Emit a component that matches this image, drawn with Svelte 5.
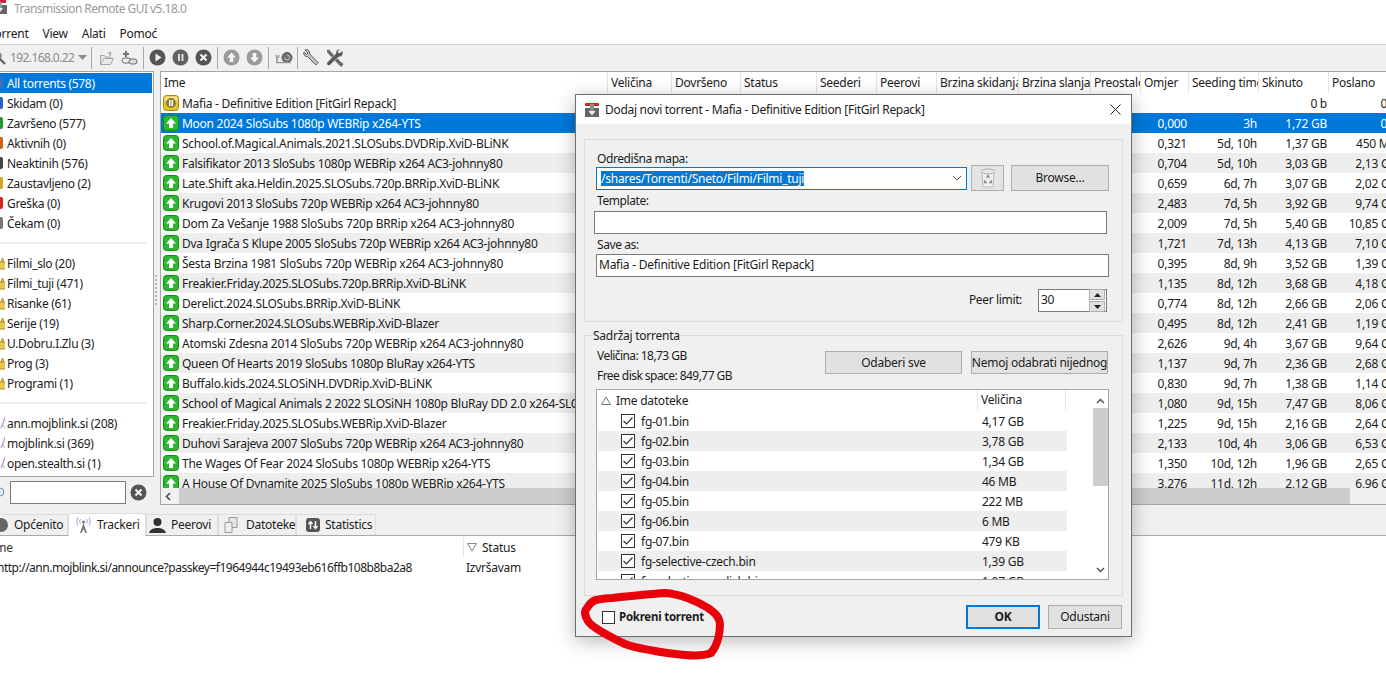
<script>
  const cols = [
    ['Ime', 447], ['Veličina', 64], ['Dovršeno', 69], ['Status', 76], ['Seederi', 60], ['Peerovi', 60],
    ['Brzina skidanja', 82], ['Brzina slanja', 72], ['Preostalo', 50], ['Omjer', 48], ['Seeding time', 70], ['Skinuto', 70], ['Poslano', 70]
  ];
  const gridCols = cols.map((c) => c[1] + 'px').join(' ');
  const torrents = [
    ['Mafia - Definitive Edition [FitGirl Repack]', '', '', '0 b', '0 b'],
    ['Moon 2024 SloSubs 1080p WEBRip x264-YTS', '0,000', '3h', '1,72 GB', '0 b'],
    ['School.of.Magical.Animals.2021.SLOSubs.DVDRip.XviD-BLiNK', '0,321', '5d, 10h', '1,37 GB', '450 MB'],
    ['Falsifikator 2013 SloSubs 1080p WEBRip x264 AC3-johnny80', '0,704', '5d, 10h', '3,03 GB', '2,13 GB'],
    ['Late.Shift aka.Heldin.2025.SLOSubs.720p.BRRip.XviD-BLiNK', '0,659', '6d, 7h', '3,07 GB', '2,02 GB'],
    ['Krugovi 2013 SloSubs 720p WEBRip x264 AC3-johnny80', '2,483', '7d, 5h', '3,92 GB', '9,74 GB'],
    ['Dom Za Vešanje 1988 SloSubs 720p BRRip x264 AC3-johnny80', '2,009', '7d, 5h', '5,40 GB', '10,85 GB'],
    ['Dva Igrača S Klupe 2005 SloSubs 720p WEBRip x264 AC3-johnny80', '1,721', '7d, 13h', '4,13 GB', '7,10 GB'],
    ['Šesta Brzina 1981 SloSubs 720p WEBRip x264 AC3-johnny80', '0,395', '8d, 9h', '3,52 GB', '1,39 GB'],
    ['Freakier.Friday.2025.SLOSubs.720p.BRRip.XviD-BLiNK', '1,135', '8d, 12h', '3,68 GB', '4,18 GB'],
    ['Derelict.2024.SLOSubs.BRRip.XviD-BLiNK', '0,774', '8d, 12h', '2,66 GB', '2,06 GB'],
    ['Sharp.Corner.2024.SLOSubs.WEBRip.XviD-Blazer', '0,495', '8d, 12h', '2,41 GB', '1,19 GB'],
    ['Atomski Zdesna 2014 SloSubs 720p WEBRip x264 AC3-johnny80', '2,626', '9d, 4h', '3,67 GB', '9,64 GB'],
    ['Queen Of Hearts 2019 SloSubs 1080p BluRay x264-YTS', '1,137', '9d, 7h', '2,36 GB', '2,68 GB'],
    ['Buffalo.kids.2024.SLOSiNH.DVDRip.XviD-BLiNK', '0,830', '9d, 7h', '1,38 GB', '1,14 GB'],
    ['School of Magical Animals 2 2022 SLOSiNH 1080p BluRay DD 2.0 x264-SLOSiNH', '1,080', '9d, 15h', '7,47 GB', '8,06 GB'],
    ['Freakier.Friday.2025.SLOSubs.WEBRip.XviD-Blazer', '1,225', '9d, 15h', '2,16 GB', '2,64 GB'],
    ['Duhovi Sarajeva 2007 SloSubs 720p WEBRip x264 AC3-johnny80', '2,133', '10d, 4h', '3,06 GB', '6,53 GB'],
    ['The Wages Of Fear 2024 SloSubs 1080p WEBRip x264-YTS', '1,350', '10d, 12h', '1,96 GB', '2,65 GB'],
    ['A House Of Dynamite 2025 SloSubs 1080p WEBRip x264-YTS', '3,276', '11d, 12h', '2,12 GB', '6,96 GB']
  ];
  const states = [
    ['All torrents (578)', '#3f6fb5'], ['Skidam (0)', '#2a62c9'], ['Završeno (577)', '#1f9a2d'], ['Aktivnih (0)', '#c7661a'],
    ['Neaktinih (576)', '#444444'], ['Zaustavljeno (2)', '#d3a71d'], ['Greška (0)', '#d9261c'], ['Čekam (0)', '#777777']
  ];
  const folders = ['Filmi_slo (20)', 'Filmi_tuji (471)', 'Risanke (61)', 'Serije (19)', 'U.Dobru.I.Zlu (3)', 'Prog (3)', 'Programi (1)'];
  const trackers = ['ann.mojblink.si (208)', 'mojblink.si (369)', 'open.stealth.si (1)'];
  const files = [
    ['fg-01.bin', '4,17 GB'], ['fg-02.bin', '3,78 GB'], ['fg-03.bin', '1,34 GB'], ['fg-04.bin', '46 MB'], ['fg-05.bin', '222 MB'],
    ['fg-06.bin', '6 MB'], ['fg-07.bin', '479 KB'], ['fg-selective-czech.bin', '1,39 GB'], ['fg-selective-english.bin', '1,97 GB']
  ];
</script>

<div class="app">
  <div class="title">
    <svg class="appicon" width="16" height="16" viewBox="0 0 16 16"><rect x="1" y="6" width="14" height="9" fill="#666"/><rect x="2" y="1" width="12" height="3" fill="#d2232a"/><rect x="6" y="3" width="4" height="6" fill="#999"/><path d="M5 9h6l-3 4z" fill="#eee"/></svg>
    <span>Transmission Remote GUI v5.18.0</span>
  </div>
  <div class="menu"><span class="first">Torrent</span><span>View</span><span>Alati</span><span>Pomoć</span></div>

  <div class="toolbar">
    <svg class="t-search" width="16" height="16" viewBox="0 0 16 16"><circle cx="6" cy="6" r="4" fill="#bbb" stroke="#777" stroke-width="1.4"/><path d="M9 9l5 5" stroke="#666" stroke-width="2.4"/></svg>
    <span class="host">192.168.0.22</span>
    <svg class="t-drop" width="9" height="5" viewBox="0 0 9 5"><path d="M0 0h9L4.500 5z" fill="#8a8a8a"/></svg>
    <i class="sep s1"></i>
    <svg class="t-a" width="16" height="16" viewBox="0 0 16 16"><path d="M1.500 14.500v-9h4l1 1.500h5v2M1.500 14.500h10l3-6H5z" fill="#e7e7e7" stroke="#a5a5a5"/><path d="M8 4l3-3 3 3-2 0v2h-2V4z" fill="#bbb"/></svg>
    <svg class="t-b" width="17" height="16" viewBox="0 0 17 16"><path d="M5 1v6M2 4h6" stroke="#777" stroke-width="2"/><rect x="1" y="8" width="9" height="5" rx="2.500" fill="#eee" stroke="#666"/><rect x="8" y="9" width="8" height="5" rx="2.500" fill="#ddd" stroke="#666"/></svg>
    <i class="sep s2"></i>
    <svg class="t-c" width="17" height="17" viewBox="0 0 17 17"><circle cx="8.500" cy="8.500" r="8" fill="#555"/><path d="M6.500 4.500l6 4-6 4z" fill="#f2f2f2"/></svg>
    <svg class="t-d" width="17" height="17" viewBox="0 0 17 17"><circle cx="8.500" cy="8.500" r="8" fill="#616161"/><path d="M6 5h2v7H6zM9.500 5h2v7h-2z" fill="#ddd"/></svg>
    <svg class="t-d" width="17" height="17" viewBox="0 0 17 17"><circle cx="8.500" cy="8.500" r="8" fill="#555"/><path d="M5.500 5.500l6 6M11.500 5.500l-6 6" stroke="#f2f2f2" stroke-width="2.200"/></svg>
    <i class="sep s3"></i>
    <svg class="t-c" width="17" height="17" viewBox="0 0 17 17"><circle cx="8.500" cy="8.500" r="8" fill="#9a9a9a"/><path d="M8.500 3.500l4.500 5h-2.700v4.500H6.700V8.500H4z" fill="#f5f5f5"/></svg>
    <svg class="t-d" width="17" height="17" viewBox="0 0 17 17"><circle cx="8.500" cy="8.500" r="8" fill="#9a9a9a"/><path d="M8.500 13.500L4 8.500h2.700V4h3.600v4.500H13z" fill="#f5f5f5"/></svg>
    <i class="sep s4"></i>
    <svg class="t-e" width="18" height="14" viewBox="0 0 18 14"><circle cx="12" cy="6.500" r="5" fill="#6e6e6e" stroke="#555"/><path d="M12 4a2.500 2.500 0 1 1-2.500 2.500" fill="none" stroke="#c8c8c8"/><path d="M1 11.500h15M2 11V7M1 4l1 3M4 4L3 7" stroke="#999" stroke-width="1.500" fill="none"/></svg>
    <i class="sep s5"></i>
    <svg class="t-f" width="16" height="17" viewBox="0 0 16 17"><path d="M2 1c3-1 5 1 4.500 4l8.500 8.500-2 2.500L4.500 7.500C2 8 0 5.500 1 3l2.500 2.500L5 4z" fill="#c9c9c9" stroke="#555"/></svg>
    <svg class="t-g" width="18" height="18" viewBox="0 0 18 18"><path d="M1 1l2-.5 2.500 3 9.500 9.500 2.500 2-2 3-2.500-2L3.500 6 1 3z" fill="#6a6a6a"/><path d="M16.500 1.500l-2.500 2.500-1.500-.5-.5-1.500L14.500.5C11.500-.5 9.500 2 10 4.500L1.500 13c-1.500 1.500-.5 4 2 3.500L12.500 8c3 .5 5.500-2.500 4-6.500z" fill="#555" stroke="#f0f0f0" stroke-width=".6"/></svg>
  </div>

  <div class="main">
    <div class="side">
      <div class="cats">
        {#each states as s, i}
          <div class="cat" class:on={i === 0}>
            <svg class="mini" width="16" height="12" viewBox="0 0 16 12"><rect x="2" y="0" width="12" height="12" rx="2" fill={s[1]}/></svg>
            <span>{s[0]}</span>
          </div>
        {/each}
        <div class="div"><i></i></div>
        {#each folders as f}
          <div class="cat">
            <svg class="mini" width="16" height="14" viewBox="0 0 16 14"><path d="M12 6l1.500-4 1.500 4" fill="#e9c84f" stroke="#b08d2a" stroke-width="1"/><path d="M10 6h7v7h-7z" fill="#e9c84f" stroke="#b08d2a"/></svg>
            <span>{f}</span>
          </div>
        {/each}
        <div class="div"><i></i></div>
        {#each trackers as t}
          <div class="cat">
            <svg class="mini" width="16" height="14" viewBox="0 0 16 14"><path d="M16 1c-1 3-2 7-4 11" stroke="#b99ad9" stroke-width="1.300" fill="none"/><path d="M13 8l3 4" stroke="#aaa" stroke-width="1"/></svg>
            <span>{t}</span>
          </div>
        {/each}
      </div>
      <div class="filter">
        <svg class="f-ic" width="12" height="14" viewBox="0 0 12 14"><circle cx="2" cy="6" r="4" fill="#dbe8f7" stroke="#7a8fa8"/></svg>
        <div class="f-in"></div>
        <svg class="f-x" width="17" height="17" viewBox="0 0 17 17"><circle cx="8.500" cy="8.500" r="8" fill="#555"/><path d="M5.500 5.500l6 6M11.500 5.500l-6 6" stroke="#f2f2f2" stroke-width="2.200"/></svg>
      </div>
    </div>
    <div class="split"><i></i><i></i><i></i><i></i><i></i><i></i><i></i><i></i></div>
    <div class="listpanel">
      <div class="lhead" style="grid-template-columns:{gridCols}">
        {#each cols as c}<span>{c[0]}</span>{/each}
      </div>
      <div class="lrows">
        {#each torrents as t, i}
          <div class="lrow" class:alt={i % 2 === 1} class:sel={i === 1} style="grid-template-columns:{gridCols}">
            <span class="nm">
              {#if i === 0}
                <svg width="16" height="16" viewBox="0 0 16 16"><rect x="0.500" y="0.500" width="15" height="15" rx="3" fill="#e4c32c" stroke="#a28a1a"/><rect x="1.500" y="1.500" width="13" height="5" rx="2" fill="#f3e28a"/><circle cx="8" cy="8" r="5" fill="#8f7f3a"/><path d="M6 5h1.500v6H6zM8.500 5H10v6H8.500z" fill="#fff"/></svg>
              {:else}
                <svg width="16" height="16" viewBox="0 0 16 16"><rect x="0.500" y="0.500" width="15" height="15" rx="3" fill="#2fb52f" stroke="#1a8c1a"/><path d="M8 3l5 5.500h-3V13H6V8.500H3z" fill="#fff"/></svg>
              {/if}
              <b>{t[0]}</b>
            </span>
            <span></span><span></span><span></span><span></span><span></span><span></span><span></span><span></span>
            <span class="num">{t[1]}</span><span class="num">{t[2]}</span><span class="num">{t[3]}</span><span class="num">{t[4]}</span>
          </div>
        {/each}
      </div>
      <div class="hscroll">
        <svg class="h-arrow" width="6" height="9" viewBox="0 0 6 9"><path d="M5 1L1.500 4.500 5 8" stroke="#444" stroke-width="1.500" fill="none"/></svg>
        <div class="h-thumb"></div>
      </div>
    </div>
  </div>

  <div class="tabs">
    <div class="tab t1"><svg width="16" height="16" viewBox="0 0 16 16"><circle cx="8" cy="8" r="7" fill="#666"/></svg><span>Općenito</span></div>
    <div class="tab t2 active"><svg width="17" height="17" viewBox="0 0 17 17"><path d="M8.500 6L5 16h1.500l2-4 2 4H12z" fill="#777"/><circle cx="8.500" cy="5" r="1.500" fill="#777"/><path d="M5.500 2c-1 1.500-1 3 0 4.500M11.500 2c1 1.500 1 3 0 4.500M3 .5c-1.500 2.500-1.500 5.500 0 8M14 .5c1.500 2.500 1.500 5.500 0 8" stroke="#b08ed6" fill="none"/></svg><span>Trackeri</span></div>
    <div class="tab t3"><svg width="17" height="16" viewBox="0 0 17 16"><circle cx="8.500" cy="5" r="4" fill="#333"/><path d="M0 16c1-4 5-5 8.500-5s7.500 1 8.500 5z" fill="#333"/></svg><span>Peerovi</span></div>
    <div class="tab t4"><svg width="14" height="16" viewBox="0 0 14 16"><path d="M5 .5h8v10H5z" fill="#e5e5e5" stroke="#999"/><path d="M1 5.500h7v10H1z" fill="#eee" stroke="#999"/></svg><span>Datoteke</span></div>
    <div class="tab t5"><svg width="14" height="14" viewBox="0 0 14 14"><rect width="14" height="14" rx="3" fill="#555"/><path d="M4.500 11V4M2.500 6l2-2.500 2 2.500M9.500 3v7M7.500 8l2 2.500 2-2.500" stroke="#fff" stroke-width="1.400" fill="none"/></svg><span>Statistics</span></div>
  </div>
  <div class="trk">
    <div class="trk-h"><span class="c1">Name</span><span class="c2"><svg width="10" height="9" viewBox="0 0 10 9"><path d="M.5 .5h9L5 8z" fill="none" stroke="#888"/></svg><em>Status</em></span></div>
    <div class="trk-r"><span class="c1 url">http://ann.mojblink.si/announce?passkey=f1964944c19493eb616ffb108b8ba2a8</span><span class="c2r">Izvršavam</span></div>
  </div>

  <div class="dlg">
    <div class="dlg-t">
      <svg width="16" height="16" viewBox="0 0 16 16"><rect x="1" y="6" width="14" height="9" fill="#666"/><rect x="1" y="1" width="14" height="3" rx="1" fill="#c9252b"/><rect x="6" y="2" width="4" height="7" fill="#8d8d8d"/><path d="M4.500 9h7L8 13.500z" fill="#eee"/></svg>
      <span>Dodaj novi torrent - Mafia - Definitive Edition [FitGirl Repack]</span>
      <svg class="x" width="11" height="11" viewBox="0 0 11 11"><path d="M.5 .5l10 10M10.500 .5l-10 10" stroke="#222" stroke-width="1"/></svg>
    </div>
    <div class="g1">
      <div class="lb">Odredišna mapa:</div>
      <div class="r-combo">
        <div class="combo"><span class="seltext">/shares/Torrenti/Sneto/Filmi/Filmi_tuji</span><svg width="10" height="6" viewBox="0 0 10 6"><path d="M1 1l4 4 4-4" stroke="#555" fill="none"/></svg></div>
        <button class="btn trash"><svg width="16" height="20" viewBox="0 0 16 20"><path d="M2 4h12l-1 15H3z" fill="#f1f1f1" stroke="#bbb"/><ellipse cx="8" cy="3.500" rx="6.500" ry="2.500" fill="#e8e8e8" stroke="#aaa"/><path d="M6.500 10l1.500-2.500 1.500 2.500M11 12l.5 2.500H9M5 12l-.5 2.500H7" fill="none" stroke="#888" stroke-width="1.300"/></svg></button>
        <button class="btn browse">Browse...</button>
      </div>
      <div class="lb l2">Template:</div>
      <div class="input tpl"></div>
      <div class="lb l3">Save as:</div>
      <div class="input sav">Mafia - Definitive Edition [FitGirl Repack]</div>
      <div class="peer">
        <span class="pl">Peer limit:</span>
        <div class="spin"><span>30</span>
          <div class="spb"><i><svg width="7" height="4" viewBox="0 0 7 4"><path d="M0 4h7L3.500 0z" fill="#222"/></svg></i><i><svg width="7" height="4" viewBox="0 0 7 4"><path d="M0 0h7L3.500 4z" fill="#222"/></svg></i></div>
        </div>
      </div>
    </div>
    <div class="g2">
      <div class="legend">Sadržaj torrenta</div>
      <div class="info">
        <div class="inf-l"><div>Veličina: 18,73 GB</div><div>Free disk space: 849,77 GB</div></div>
        <div class="inf-b"><button class="btn sb">Odaberi sve</button><button class="btn sb">Nemoj odabrati nijednog</button></div>
      </div>
      <div class="tree">
        <div class="t-main">
          <div class="t-head"><span class="h1"><svg width="10" height="9" viewBox="0 0 10 9"><path d="M.5 8.500h9L5 1z" fill="none" stroke="#777"/></svg><em>Ime datoteke</em></span><span class="h2">Veličina</span></div>
          {#each files as f, i}
            <div class="t-row" class:alt={i % 2 === 1}>
              <span class="t-n"><svg width="14" height="14" viewBox="0 0 14 14"><rect x="0.500" y="0.500" width="13" height="13" fill="#fff" stroke="#333"/><path d="M2.500 7l3 3 6-6.500" stroke="#333" stroke-width="1.200" fill="none"/></svg><em>{f[0]}</em></span>
              <span class="t-s">{f[1]}</span>
            </div>
          {/each}
        </div>
        <div class="t-scroll">
          <svg width="9" height="6" viewBox="0 0 9 6"><path d="M1 5l3.500-3.500L8 5" stroke="#555" stroke-width="1.500" fill="none"/></svg>
          <div class="t-thumb"></div>
          <svg class="dn" width="9" height="6" viewBox="0 0 9 6"><path d="M1 1l3.500 3.500L8 1" stroke="#555" stroke-width="1.500" fill="none"/></svg>
        </div>
      </div>
    </div>
    <div class="dlg-b">
      <label class="start"><span class="box"></span><b>Pokreni torrent</b></label>
      <div class="acts"><button class="btn ok">OK</button><button class="btn">Odustani</button></div>
    </div>
  </div>

  <svg class="ring" width="1386" height="696" viewBox="0 0 1386 696"><path d="M612 598C630 596 648 594 665 593C680 594 697 601 708 608C715 613 719 616 720 624C720 632 718 645 711 653C703 656 695 656 685 655C675 654 665 653 655 651C645 649 635 648 625 644C616 640 609 636 602 632C596 628 591 626 588 621C585 616 584 611 587 608C590 603 592 601 596 600C601 599 606 598 612 598Z" fill="none" stroke="#e8000b" stroke-width="8" stroke-linejoin="round"/></svg>
</div>

<style>
  :global(body) { margin: 0; background: #fff; }
  .app { position: relative; width: 1386px; height: 696px; overflow: hidden; background: #fff; color: #1c1c1c; font: 12px/16px "Noto Sans", sans-serif; letter-spacing: -0.25px; }
  svg { display: block; flex: none; }
  em { font-style: normal; padding-top: 2px; }
  .title { height: 24px; display: flex; gap: 6px; align-items: flex-start; margin-left: -8px; color: #9a9a9a; }
  .title span { margin-top: 1px; font-size: 12px; letter-spacing: -0.54px; }
  .appicon { margin-top: -1px; }
  .menu { height: 20px; display: flex; align-items: center; gap: 14px; margin-left: -11px; border-bottom: 1px solid #d4d4d4; box-sizing: content-box; }
  .toolbar { height: 25px; background: #f0f0f0; display: flex; align-items: center; }
  .t-search { margin-left: -9px; }
  .host { margin-left: 3px; width: 63px; color: #8c8c8c; white-space: nowrap; letter-spacing: -0.6px; }
  .t-drop { margin-left: 5px; }
  .sep { width: 1px; height: 22px; background: #a9a9a9; flex: none; }
  .s1 { margin-left: 4px; } .s2 { margin-left: 5px; } .s3 { margin-left: 5px; } .s4 { margin-left: 5px; } .s5 { margin-left: 4px; }
  .t-a { margin-left: 7px; } .t-b { margin-left: 6px; } .t-c { margin-left: 5px; } .t-d { margin-left: 6px; }
  .t-e { margin-left: 6px; } .t-f { margin-left: 5px; } .t-g { margin-left: 7px; }

  .main { height: 440px; background: #f0f0f0; display: flex; align-items: flex-start; padding-top: 1px; box-sizing: border-box; }
  .side { width: 154px; flex: none; }
  .cats { height: 406px; box-sizing: border-box; background: #fff; border: 1px solid #a5a5a5; border-left: 0; padding: 1px 1px 0 0; }
  .cat { height: 20px; display: flex; align-items: center; }
  .cat span { white-space: nowrap; padding-top: 2px; letter-spacing: -0.32px; }
  .cat.on { background: #0078d7; color: #fff; }
  .mini { margin-left: -11px; margin-right: 2px; }
  .div { height: 20px; display: flex; align-items: center; padding-right: 6px; }
  .div i { display: block; width: 100%; height: 2px; background: #ececec; }
  .filter { height: 31px; display: flex; align-items: center; }
  .f-ic { margin-left: -2px; }
  .f-in { width: 114px; height: 21px; background: #fff; border: 1px solid #7a7a7a; flex: none; }
  .f-x { margin-left: 4px; }
  .split { width: 6px; flex: none; padding: 204px 0 0 1px; box-sizing: border-box; }
  .split i { display: block; width: 2px; height: 2px; margin-bottom: 2px; background: #b5b5b5; }
  .listpanel { flex: 1; min-width: 0; height: 434px; background: #fff; border: 1px solid #a5a5a5; border-width: 1px 0 1px 1px; box-sizing: border-box; overflow: hidden; }
  .lhead { display: grid; height: 21px; align-items: stretch; }
  .lhead span { padding: 3px 0 0 3px; border-right: 1px solid #e6e6e6; white-space: nowrap; overflow: hidden; box-sizing: border-box; }
  .lrows { height: 395px; overflow: hidden; }
  .lrow { display: grid; height: 20px; align-items: center; }
  .lrow span { white-space: nowrap; overflow: hidden; }
  .lrow.alt { background: #eeeeee; }
  .lrow.sel { background: #0078d7; color: #fff; }
  .nm { display: flex; align-items: center; gap: 3px; padding-left: 2px; }
  .nm b { font-weight: 400; padding-top: 2px; letter-spacing: -0.27px; }
  .lrow .num { text-align: right; padding: 2px 2px 0 0; }
  .hscroll { height: 17px; background: #f0f0f0; display: flex; align-items: center; }
  .h-arrow { margin-left: 4px; }
  .h-thumb { margin-left: 8px; width: 1171px; height: 17px; background: #cdcdcd; flex: none; }

  .tabs { height: 26px; background: #f0f0f0; display: flex; align-items: flex-end; border-bottom: 1px solid #a9a9a9; box-sizing: border-box; }
  .tab { height: 21px; display: flex; align-items: center; gap: 5px; box-sizing: border-box; background: #f0f0f0; border: 1px solid #dcdcdc; border-bottom: 0; white-space: nowrap; }
  .tab.active { height: 23px; background: #fff; margin-bottom: -1px; }
  .t1 { margin-left: -9px; width: 77px; padding-left: 1px; }
  .t2 { width: 78px; padding-left: 6px; }
  .t3 { width: 72px; padding-left: 2px; }
  .t4 { width: 78px; padding-left: 5px; gap: 8px; }
  .t5 { width: 80px; padding-left: 9px; gap: 5px; }
  .trk-h, .trk-r { display: flex; height: 20px; align-items: center; }
  .trk-h { margin-top: 1px; }
  .trk-h .c1 { margin-left: -20px; width: 483px; color: #333; padding-top: 2px; }
  .c1 { white-space: nowrap; flex: none; box-sizing: border-box; }
  .url { margin-left: -3px; width: 469px; letter-spacing: -0.5px; padding-top: 2px; }
  .c2 { display: flex; align-items: center; gap: 5px; height: 20px; border-left: 1px solid #e6e6e6; padding-left: 3px; }
  .c2r { padding-top: 2px; }

  .dlg { position: absolute; left: 575px; top: 94px; width: 557px; height: 543px; box-sizing: border-box; background: #f0f0f0; border: 1px solid #6e6e6e; box-shadow: 0 4px 18px rgba(0, 0, 0, 0.28); }
  .dlg-t { height: 29px; background: #fff; display: flex; align-items: center; gap: 5px; padding-left: 8px; letter-spacing: -0.3px; }
  .dlg-t span { flex: 1; }
  .x { margin-right: 10px; }
  .g1, .g2 { margin: 0 8px; width: 539px; box-sizing: border-box; border: 1px solid #dcdcdc; }
  .g1 { margin-top: 15px; height: 183px; padding: 10px 0 0 11px; }
  .lb { height: 16px; padding: 1px 0 0 1px; letter-spacing: -0.42px; box-sizing: content-box; }
  .r-combo { display: flex; align-items: center; height: 26px; margin-top: -2px; }
  .combo { width: 371px; height: 23px; box-sizing: border-box; background: #fff; border: 1px solid #0078d7; display: flex; align-items: center; justify-content: space-between; padding: 0 4px; flex: none; }
  .seltext { background: #0078d7; color: #fff; white-space: nowrap; line-height: 15px; }
  .btn { font: inherit; letter-spacing: inherit; color: #1c1c1c; background: #e1e1e1; border: 1px solid #adadad; padding: 0; box-sizing: border-box; white-space: nowrap; display: flex; align-items: center; justify-content: center; width: 74px; height: 24px; }
  .trash { width: 33px; height: 26px; margin-left: 4px; background: #e4e4e4; }
  .browse { width: 98px; height: 26px; margin-left: 7px; }
  .l2 { margin: 1px 0 -1px; }
  .input { height: 23px; box-sizing: border-box; background: #fff; border: 1px solid #7a7a7a; padding: 2px 2px 0; white-space: nowrap; }
  .tpl { width: 513px; margin: 3px 0 0 -2px; }
  .l3 { margin: 2px 0 -1px; }
  .sav { width: 513px; margin-top: 2px; }
  .peer { display: flex; justify-content: flex-end; align-items: center; gap: 16px; margin-top: 12px; width: 511px; }
  .pl { padding-bottom: 2px; letter-spacing: -0.35px; }
  .spin { width: 69px; height: 23px; box-sizing: border-box; background: #fff; border: 1px solid #7a7a7a; display: flex; align-items: center; justify-content: space-between; padding: 0 1px 0 2px; }
  .spin > span { padding-bottom: 1px; }
  .spb { width: 16px; display: flex; flex-direction: column; gap: 1px; }
  .spb i { height: 9px; background: #e1e1e1; border: 1px solid #adadad; display: flex; align-items: center; justify-content: center; }
  .g2 { margin-top: 13px; height: 261px; padding: 0 14px 0 12px; }
  .legend { width: fit-content; margin: -8px 0 0 -4px; background: #f0f0f0; height: 16px; }
  .info { display: flex; justify-content: space-between; height: 36px; margin-top: 3px; }
  .inf-l { padding-top: 1px; letter-spacing: -0.55px; }
  .inf-l div { height: 20px; }
  .inf-b { display: flex; gap: 9px; padding-top: 4px; }
  .sb { width: 137px; height: 23px; }
  .tree { width: 513px; height: 191px; margin: 6px 0 0 -1px; box-sizing: border-box; border: 1px solid #a5a5a5; background: #fff; display: flex; overflow: hidden; }
  .t-main { width: 469px; padding-left: 1px; flex: none; }
  .t-head { display: flex; height: 21px; align-items: flex-start; }
  .h1 { width: 380px; display: flex; align-items: center; gap: 5px; padding-left: 3px; box-sizing: border-box; border-right: 1px solid #e6e6e6; height: 20px; }
  .h2 { width: 88px; padding: 2px 0 0 3px; box-sizing: border-box; border-right: 1px solid #e6e6e6; height: 20px; }
  .t-row { display: flex; height: 20px; align-items: center; }
  .t-row.alt { background: #eeeeee; }
  .t-n { width: 380px; display: flex; align-items: center; gap: 6px; padding-left: 23px; box-sizing: border-box; }
  .t-s { padding: 2px 0 0 4px; }
  .t-scroll { margin-left: 25px; width: 17px; flex: none; display: flex; flex-direction: column; align-items: center; padding-top: 8px; box-sizing: border-box; }
  .t-thumb { width: 15px; height: 78px; margin-top: 4px; background: #cdcdcd; flex: none; }
  .dn { margin-top: auto; margin-bottom: 6px; }
  .dlg-b { display: flex; justify-content: space-between; align-items: center; margin-top: 9px; padding: 0 9px 0 26px; height: 24px; }
  .start { display: flex; align-items: center; gap: 4px; }
  .start b { font-weight: 700; font-size: 11.5px; }
  .box { width: 13px; height: 13px; box-sizing: border-box; background: #fff; border: 1px solid #333; }
  .acts { display: flex; gap: 8px; }
  .ok { border: 2px solid #0078d7; font-weight: 700; }
  .ring { position: absolute; left: 0; top: 0; pointer-events: none; }
</style>
